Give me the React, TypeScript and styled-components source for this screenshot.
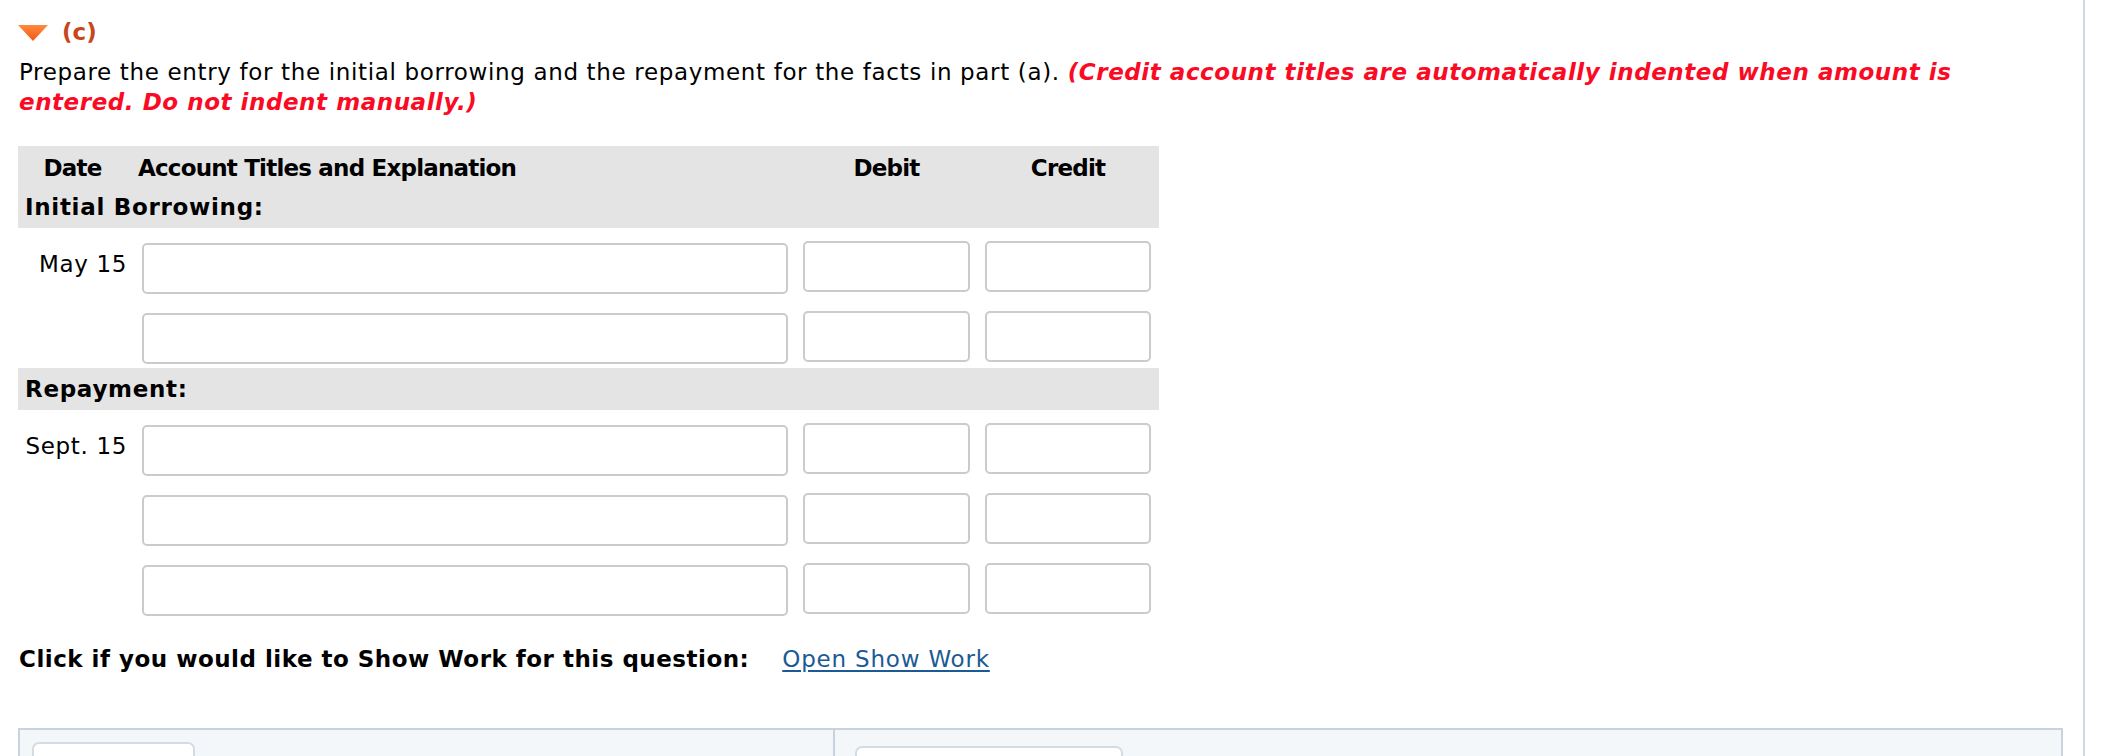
import styled, { createGlobalStyle } from "styled-components";

const GlobalStyle = createGlobalStyle`
  html, body {
    margin: 0;
    padding: 0;
    background: #fff;
    overflow: hidden;
  }
  body {
    font-family: "DejaVu Sans", Verdana, sans-serif;
    color: #000;
  }
`;

const Page = styled.div`
  width: 2085px;
  height: 756px;
  box-sizing: border-box;
  border-right: 2px solid #d3d9e0;
  padding: 19px 22px 0 18px;
  font-size: 23px;
  letter-spacing: 0.65px;
`;

const PartHeading = styled.h3`
  display: flex;
  align-items: center;
  gap: 14px;
  margin: 0;
  font-size: 23px;
  font-weight: bold;
  color: #c8461b;
  line-height: 27px;
  letter-spacing: 0;
`;

const Prompt = styled.p`
  margin: 11px 0 0;
  line-height: 30px;
  padding-left: 1px;
`;

const Warning = styled.em`
  color: #fb0a24;
  font-weight: bold;
  letter-spacing: 0.55px;
`;

const Journal = styled.div`
  margin-top: 29px;
  width: 1141px;
`;

const Band = styled.div<{ $header?: boolean }>`
  background: #e4e4e4;
  padding: ${(p) => (p.$header ? "3px 0 1px" : "0")};
`;

const Grid = styled.div`
  display: grid;
  grid-template-columns: 109px 646px 167px 166px;
  column-gap: 15px;
`;

const HeadRow = styled(Grid)`
  line-height: 39px;
  font-weight: bold;
  letter-spacing: -0.8px;
`;

const HeadCell = styled.div<{ $align?: string }>`
  text-align: ${(p) => p.$align || "center"};
  margin-left: ${(p) => (p.$align === "left" ? "-4px" : "0")};
`;

const SectionTitle = styled.div<{ $tall?: boolean }>`
  font-weight: bold;
  padding-left: 7px;
  letter-spacing: 0.7px;
  line-height: ${(p) => (p.$tall ? "42px" : "39px")};
`;

const EntryRow = styled(Grid)`
  padding: 13px 0 0;
  height: 70px;
  box-sizing: border-box;
  align-items: start;
`;

const DateCell = styled.div`
  text-align: right;
  padding: 10px 0 0 0;
  white-space: nowrap;
`;

const Field = styled.input<{ $shift?: boolean }>`
  box-sizing: border-box;
  height: 51px;
  width: 100%;
  margin: ${(p) => (p.$shift ? "2px 0 0" : "0")};
  border: 2px solid #cbcbcb;
  border-radius: 5px;
  background: #fff;
  font: inherit;
  outline: none;
`;

const ShowWork = styled.div`
  margin-top: 26px;
  font-weight: bold;
  display: flex;
  align-items: baseline;
  padding-left: 1px;
  letter-spacing: 0.5px;
`;

const WorkLink = styled.a`
  margin-left: 33px;
  font-weight: normal;
  color: #1b5a96;
  letter-spacing: 0.8px;
  text-decoration: underline;
  text-underline-offset: 3px;
  cursor: pointer;
`;

const ToolPanel = styled.div`
  margin-top: 56px;
  display: grid;
  grid-template-columns: 815px 1fr;
  height: 80px;
  box-sizing: border-box;
  border: 2px solid #c8d3df;
  border-bottom: none;
  background: #f3f7fa;
  width: 2045px;
`;

const PanelHalf = styled.div<{ $divider?: boolean }>`
  border-right: ${(p) => (p.$divider ? "2px solid #c8d3df" : "none")};
  padding: ${(p) => (p.$divider ? "12px 0 0 12px" : "16px 0 0 20px")};
`;

const PanelButton = styled.button<{ $w: number; $labelTop: number }>`
  width: ${(p) => p.$w}px;
  height: 48px;
  border: 2px solid #d3dbe4;
  border-radius: 7px;
  background: #fff;
  color: #1f3d6b;
  font-family: "DejaVu Sans", Verdana, sans-serif;
  font-weight: bold;
  font-size: 17px;
  text-align: left;
  padding: ${(p) => p.$labelTop}px 12px 0;
  vertical-align: top;
`;

function Caret() {
  return (
    <svg width="30" height="16" viewBox="0 0 30 16">
      <defs>
        <linearGradient id="caretFill" x1="0" y1="0" x2="0" y2="1">
          <stop offset="0" stopColor="#ff8a3a" />
          <stop offset="1" stopColor="#f2561a" />
        </linearGradient>
      </defs>
      <polygon points="0,0 30,0 15,16" fill="url(#caretFill)" />
    </svg>
  );
}

type Entry = { date?: string };

const borrowing: Entry[] = [{ date: "May 15" }, {}];
const repayment: Entry[] = [{ date: "Sept. 15" }, {}, {}];

function Rows({ entries }: { entries: Entry[] }) {
  return (
    <>
      {entries.map((e, i) => (
        <EntryRow key={i}>
          <DateCell>{e.date}</DateCell>
          <Field $shift />
          <Field />
          <Field />
        </EntryRow>
      ))}
    </>
  );
}

export default function App() {
  return (
    <>
      <GlobalStyle />
      <Page>
        <PartHeading>
          <Caret />
          <span>(c)</span>
        </PartHeading>
        <Prompt>
          Prepare the entry for the initial borrowing and the repayment for the facts in part (a).{" "}
          <Warning>
            (Credit account titles are automatically indented when amount is entered. Do not indent manually.)
          </Warning>
        </Prompt>

        <Journal>
          <Band $header>
            <HeadRow>
              <HeadCell>Date</HeadCell>
              <HeadCell $align="left">Account Titles and Explanation</HeadCell>
              <HeadCell>Debit</HeadCell>
              <HeadCell>Credit</HeadCell>
            </HeadRow>
            <SectionTitle>Initial Borrowing:</SectionTitle>
          </Band>
          <Rows entries={borrowing} />
          <Band>
            <SectionTitle $tall>Repayment:</SectionTitle>
          </Band>
          <Rows entries={repayment} />
        </Journal>

        <ShowWork>
          Click if you would like to Show Work for this question:
          <WorkLink>Open Show Work</WorkLink>
        </ShowWork>

        <ToolPanel>
          <PanelHalf $divider>
            <PanelButton $w={163} $labelTop={10}>LINK TO TEXT</PanelButton>
          </PanelHalf>
          <PanelHalf>
            <PanelButton $w={268} $labelTop={14}>VIEW SOLUTION</PanelButton>
          </PanelHalf>
        </ToolPanel>
      </Page>
    </>
  );
}
